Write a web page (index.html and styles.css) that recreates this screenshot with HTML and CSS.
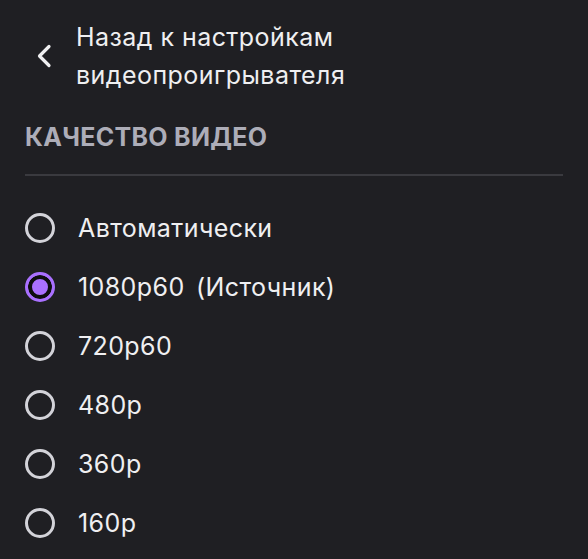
FILE: index.html
```html
<!DOCTYPE html>
<html lang="ru">
<head>
<meta charset="utf-8">
<link rel="stylesheet" href="styles.css">
</head>
<body>
<div class="menu">
  <button class="back">
    <svg class="chev" width="16" height="24" viewBox="0 0 16 24"><path d="M13 2.5 L3.5 12 L13 21.5" fill="none" stroke="#efeff1" stroke-width="3.2" stroke-linecap="round" stroke-linejoin="round"/></svg>
    <span class="back-text">Назад к настройкам<br>видеопроигрывателя</span>
  </button>
  <div class="title">КАЧЕСТВО ВИДЕО</div>
  <div class="divider"></div>
  <ul class="options">
    <li class="opt"><span class="radio"></span><span class="label">Автоматически</span></li>
    <li class="opt"><span class="radio checked"></span><span class="label">1080p60 <span class="src">(Источник)</span></span></li>
    <li class="opt"><span class="radio"></span><span class="label">720p60</span></li>
    <li class="opt"><span class="radio"></span><span class="label">480p</span></li>
    <li class="opt"><span class="radio"></span><span class="label">360p</span></li>
    <li class="opt"><span class="radio"></span><span class="label">160p</span></li>
  </ul>
</div>
</body>
</html>
```
FILE: styles.css
```css
html, body {
  margin: 0;
  padding: 0;
  background: #1f1f23;
  height: 100%;
}
body {
  font-family: Inter, "Noto Sans", sans-serif;
  color: #efeff1;
  overflow: hidden;
}
.menu {
  padding: 18px 25px 0 25px;
  width: 538px;
}
.back {
  display: flex;
  align-items: center;
  background: none;
  border: 0;
  padding: 0 0 0 11px;
  margin: 0;
  color: #efeff1;
  font: inherit;
  text-align: left;
}
.chev {
  display: block;
  flex: none;
}
.back-text {
  margin-left: 24px;
  font-size: 25px;
  letter-spacing: 0.45px;
  line-height: 38px;
}
.title {
  margin-top: 26px;
  font-size: 25px;
  letter-spacing: 0.3px;
  font-weight: 700;
  line-height: 34px;
  color: #adadb8;
}
.divider {
  margin-top: 20px;
  height: 2px;
  background: #3a3a3f;
}
.options {
  list-style: none;
  margin: 22px 0 0 0;
  padding: 0;
}
.opt {
  display: flex;
  align-items: center;
  height: 59px;
}
.radio {
  box-sizing: border-box;
  flex: none;
  width: 30px;
  height: 30px;
  border-radius: 50%;
  border: 3px solid #d3d3d9;
}
.radio.checked {
  border-color: #a970ff;
  background: #a970ff;
  box-shadow: inset 0 0 0 4px #0e0e10;
}
.label {
  margin-left: 23px;
  font-size: 25px;
  letter-spacing: 0.4px;
  line-height: 34px;
}
.src {
  margin-left: 4px;
}
```
